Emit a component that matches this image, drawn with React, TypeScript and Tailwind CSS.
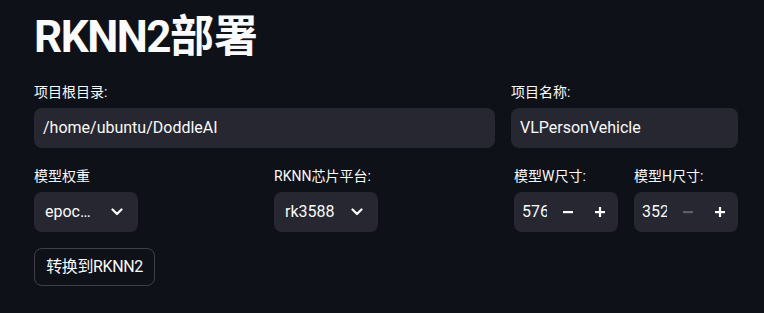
import React from "react";

const font = { fontFamily: 'Roboto, "Noto Sans CJK SC", sans-serif' };

function Label({ children }: { children: React.ReactNode }) {
  return (
    <div className="flex h-6 items-center text-[14px] leading-[24px] text-[#fafafa] mb-1">
      {children}
    </div>
  );
}

function Chevron() {
  return (
    <svg width="12" height="8" viewBox="0 0 12 8" fill="none">
      <path d="M1.5 1.5 L6 6 L10.5 1.5" stroke="#fafafa" strokeWidth="2.2" strokeLinecap="round" strokeLinejoin="round" />
    </svg>
  );
}

function Select({ value }: { value: string }) {
  return (
    <div className="flex h-10 w-[104px] items-center justify-between rounded-lg bg-[#262730] pl-[11px] pr-[15px]">
      <span className="text-[16px] text-[#fafafa]">{value}</span>
      <Chevron />
    </div>
  );
}

function NumberInput({ value, minusDisabled }: { value: string; minusDisabled?: boolean }) {
  const minusColor = minusDisabled ? "#5b5c64" : "#fafafa";
  return (
    <div className="flex h-10 w-[104px] items-center rounded-lg bg-[#262730]">
      <div className="w-[38px] pl-2 pr-[5px]">
        <div className="overflow-hidden whitespace-nowrap text-[16px] text-[#fafafa]">{value}</div>
      </div>
      <div className="flex h-10 w-8 items-center justify-center">
        <svg width="12" height="12" viewBox="0 0 12 12">
          <rect x="1" y="5" width="10" height="2.2" fill={minusColor} />
        </svg>
      </div>
      <div className="flex h-10 w-8 items-center justify-center">
        <svg width="12" height="12" viewBox="0 0 12 12">
          <rect x="1" y="5" width="10" height="2.2" fill="#fafafa" />
          <rect x="4.9" y="1" width="2.2" height="10" fill="#fafafa" />
        </svg>
      </div>
    </div>
  );
}

export default function App() {
  return (
    <div className="min-h-[313px] w-[764px] bg-[#0e1117] text-[#fafafa]" style={font}>
      <div className="ml-[34px] w-[704px] pt-[11px] flex flex-col gap-4">
        <h1 className="text-[44px] font-bold leading-[53px]">
          <span className="tracking-[-1.5px]">RKNN2</span>部署
        </h1>
        <div className="flex gap-4">
          <div className="w-[461px]">
            <Label>项目根目录:</Label>
            <div className="flex h-10 items-center rounded-lg bg-[#262730] pl-[9px] text-[16px]">
              /home/ubuntu/DoddleAI
            </div>
          </div>
          <div className="w-[227px]">
            <Label>项目名称:</Label>
            <div className="flex h-10 items-center rounded-lg bg-[#262730] pl-[9px] text-[16px]">
              VLPersonVehicle
            </div>
          </div>
        </div>
        <div className="flex gap-4">
          <div className="w-[224px]">
            <Label>模型权重</Label>
            <Select value="epoc…" />
          </div>
          <div className="w-[224px]">
            <Label>RKNN芯片平台:</Label>
            <Select value="rk3588" />
          </div>
          <div className="flex w-[224px] gap-4">
            <div className="w-[104px]">
              <Label>模型W尺寸:</Label>
              <NumberInput value="576" />
            </div>
            <div className="w-[104px]">
              <Label>模型H尺寸:</Label>
              <NumberInput value="352" minusDisabled />
            </div>
          </div>
        </div>
        <div>
          <button className="flex h-[38px] w-[121px] items-center justify-center whitespace-nowrap rounded-lg border border-[rgba(250,250,250,0.2)] bg-transparent text-[16px] tracking-[-0.4px] text-[#fafafa]">
            转换到RKNN2
          </button>
        </div>
      </div>
    </div>
  );
}
